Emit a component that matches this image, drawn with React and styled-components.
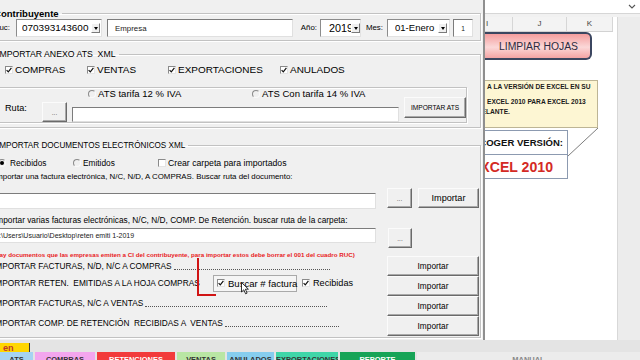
import React from 'react'
import styled, { createGlobalStyle } from 'styled-components'

const NARROW = `"Liberation Sans", Arial, sans-serif`
const SANS = `"Liberation Sans", Arial, sans-serif`
const K = 0.83
const fs = px => `${(px * K).toFixed(2)}px`

const GlobalStyle = createGlobalStyle`
  * { box-sizing: border-box; }
  html, body { margin: 0; padding: 0; }
  body {
    width: 640px;
    height: 360px;
    overflow: hidden;
    background: #fff;
    font-family: ${NARROW};
    color: #000;
  }
`

const Screen = styled.div`
  width: 640px;
  height: 360px;
  display: flex;
  flex-direction: column;
  overflow: hidden;
`
const Main = styled.div`
  display: flex;
  height: 340px;
`

/* ---------- the VBA user form ---------- */
const UserForm = styled.div`
  flex: 0 0 495px;
  margin-left: -10px;
  height: 340px;
  background: #f0f0f0;
  border-right: 2px solid #8f8f8f;
  padding: 0 2px;
  display: flex;
  flex-direction: column;
`
const Frame = styled.fieldset`
  margin: ${p => p.$top}px 0 0;
  padding: 0 0 ${p => p.$pad || 0}px;
  min-width: 0;
  border: 1px solid #c2c2c2;
  box-shadow: inset 1px 1px 0 #fff, 1px 1px 0 #fff;
`
const Legend = styled.legend`
  margin-left: ${p => p.$indent}px;
  padding: 0 3px 0 0;
  font-size: ${p => fs(p.$size)};
  font-weight: ${p => (p.$bold ? 700 : 400)};
  line-height: 11px;
  white-space: pre;
`
const InnerFrame = styled.div`
  display: flex;
  margin: 10px 13px 0 2px;
  height: 36px;
  border: 1px solid #c2c2c2;
  box-shadow: inset 1px 1px 0 #fff, 1px 1px 0 #fff;
`
const Column = styled.div`
  display: flex;
  flex-direction: column;
  flex: ${p => (p.$w ? 'none' : '1')};
  width: ${p => (p.$w ? `${p.$w}px` : 'auto')};
  margin-top: ${p => p.$mt || 0}px;
  min-width: 0;
`
const Row = styled.div`
  display: flex;
  align-items: ${p => p.$align || 'center'};
  height: ${p => p.$h}px;
  margin-top: ${p => p.$mt || 0}px;
  padding-left: ${p => p.$pl || 0}px;
  flex: none;
`
const FieldLabel = styled.span`
  flex: none;
  width: ${p => p.$w}px;
  padding-left: ${p => p.$pl || 0}px;
  padding-right: ${p => p.$pr || 0}px;
  text-align: ${p => p.$align || 'right'};
  font-size: ${p => fs(p.$fs || 10)};
  align-self: ${p => p.$self || 'auto'};
  line-height: 12px;
  white-space: nowrap;
`
const Combo = styled.div`
  flex: none;
  width: ${p => p.$w}px;
  height: 18px;
  display: flex;
  align-items: center;
  background: #fff;
  border: 1px solid;
  border-color: #8c8c8c #e2e2e2 #e2e2e2 #8c8c8c;
  padding-left: ${p => p.$pl}px;
  padding-right: ${p => p.$pr}px;
`
const ComboText = styled.span`
  flex: 1;
  overflow: hidden;
  white-space: nowrap;
  font-size: ${p => fs(p.$fs)};
  line-height: 16px;
`
const DropButton = styled.span`
  flex: none;
  width: 9px;
  height: 10px;
  background: #f0f0f0;
  border: 1px solid;
  border-color: #fff #7a7a7a #7a7a7a #fff;
  display: flex;
  align-items: center;
  justify-content: center;
  &::after {
    content: '';
    border-left: 2.5px solid transparent;
    border-right: 2.5px solid transparent;
    border-top: 3px solid #000;
  }
`
const TextBox = styled.div`
  flex: ${p => (p.$grow ? '1' : 'none')};
  width: ${p => (p.$w ? `${p.$w}px` : 'auto')};
  height: ${p => p.$h}px;
  margin-left: ${p => p.$ml || 0}px;
  align-self: ${p => p.$self || 'auto'};
  display: flex;
  align-items: center;
  justify-content: ${p => (p.$center ? 'center' : 'flex-start')};
  padding-left: ${p => p.$pl || 0}px;
  background: #fff;
  border: 1px solid;
  border-color: #7c7c7c #e0e0e0 #e0e0e0 #7c7c7c;
  font-size: ${p => fs(p.$fs || 9)};
  white-space: nowrap;
  overflow: hidden;
  color: #222;
`
const Option = styled.label`
  flex: none;
  width: ${p => (p.$w ? `${p.$w}px` : 'auto')};
  margin-left: ${p => p.$ml || 0}px;
  display: flex;
  align-items: center;
  gap: ${p => p.$gap ?? 2}px;
  font-size: ${p => fs(p.$fs || 10)};
  white-space: nowrap;
  line-height: 12px;
`
const CheckBox = styled.span`
  flex: none;
  width: 8px;
  height: 8px;
  background: #fff;
  border: 1px solid;
  border-color: #8a8a8a #e4e4e4 #e4e4e4 #8a8a8a;
  display: inline-flex;
  align-items: center;
  justify-content: center;
`
const RadioDot = styled.span`
  flex: none;
  width: 8px;
  height: 8px;
  border-radius: 50%;
  border: 1px solid;
  border-color: #8a8a8a #fafafa #fafafa #8a8a8a;
  display: inline-flex;
  align-items: center;
  justify-content: center;
  &::after {
    content: '';
    width: 4px;
    height: 4px;
    border-radius: 50%;
    background: ${p => (p.$on ? '#000' : 'transparent')};
  }
`
const Button = styled.button`
  flex: none;
  width: ${p => p.$w}px;
  height: ${p => p.$h}px;
  margin: ${p => p.$mt || 0}px 0 0 ${p => p.$ml || 0}px;
  padding: 0;
  align-self: ${p => p.$self || 'auto'};
  background: #f0f0f0;
  border: 1px solid;
  border-color: #fbfbfb #6a6a6a #6a6a6a #fbfbfb;
  box-shadow: inset -1px -1px 0 #a9a9a9;
  font-family: ${NARROW};
  font-size: ${p => fs(p.$fs || 10)};
  color: ${p => p.$color || '#000'};
  white-space: nowrap;
`
const InfoLine = styled.div`
  height: 12px;
  margin-top: ${p => p.$mt}px;
  padding-left: 1px;
  font-size: ${p => fs(p.$fs)};
  line-height: 12px;
  white-space: nowrap;
`
const Bottom = styled.div`
  display: flex;
  height: 86px;
  margin-top: 2px;
`
const RedNote = styled.div`
  height: 10px;
  font-size: ${fs(7.5)};
  font-weight: 700;
  line-height: 10px;
  color: #e8201c;
  white-space: nowrap;
`
const TaskRow = styled.div`
  position: relative;
  display: flex;
  align-items: center;
  height: ${p => p.$h}px;
  width: ${p => (p.$w ? `${p.$w}px` : 'auto')};
  font-size: ${fs(10)};
`
const TaskText = styled.span`
  flex: none;
  width: ${p => (p.$w ? `${p.$w}px` : 'auto')};
  white-space: pre;
`
const Leader = styled.span`
  flex: 1;
  height: 1px;
  margin: 7px 0 0 2px;
  border-bottom: 1px dotted #555;
`
const ToggleBox = styled.label`
  flex: none;
  width: 84px;
  height: 17px;
  display: flex;
  align-items: center;
  gap: 3px;
  padding-left: 3px;
  border: 1px solid #a9a9a9;
  background: #f5f5f5;
  font-size: ${fs(11.5)};
  white-space: nowrap;
`
const Annotation = styled.svg`
  position: absolute;
  left: 203px;
  top: -15px;
`
const Cursor = styled.svg`
  position: absolute;
  left: 248px;
  top: 10px;
`

/* ---------- the excel sheet on the right ---------- */
const Sheet = styled.div`
  flex: 1;
  display: flex;
  flex-direction: column;
  overflow: hidden;
  background: #fff;
`
const FormulaBar = styled.div`
  height: 14px;
  border-bottom: 1px solid #d6d6d6;
  display: flex;
  justify-content: flex-end;
  align-items: center;
  padding-right: 4px;
`
const Band = styled.div`
  height: 3px;
  background: #f1f1f1;
`
const GridArea = styled.div`
  flex: 1;
  display: flex;
`
const Cells = styled.div`
  width: 128px;
  display: flex;
  flex-direction: column;
`
const HeaderRow = styled.div`
  height: 15px;
  display: flex;
  background: #f3f3f3;
  border-bottom: 1px solid #d2d2d2;
`
const HeaderCell = styled.div`
  width: ${p => p.$w}px;
  border-right: 1px solid #d6d6d6;
  font: 8px/14px ${SANS};
  color: #444;
  text-align: ${p => p.$align || 'center'};
  padding-left: ${p => p.$pl || 0}px;
`
const SheetBody = styled.div`
  flex: 1;
  position: relative;
  display: flex;
  flex-direction: column;
  align-items: flex-start;
`
const ShapeButton = styled.div`
  width: 107px;
  height: 28px;
  display: flex;
  align-items: center;
  justify-content: center;
  padding-left: 2px;
  border: 2px solid #3b4660;
  border-left: none;
  border-radius: 0 6px 6px 0;
  background: linear-gradient(180deg, #f49d9d 0%, #fbd8d8 55%, #f4a4a4 100%);
  font-size: ${fs(12.5)};
  color: #2b2b40;
  white-space: nowrap;
`
const Note = styled.div`
  width: 113px;
  height: 48px;
  margin-top: 20px;
  padding: 1px 0 0 2px;
  background: #fdf6d3;
  border: 1px solid #bdb595;
  border-left: none;
  font-size: ${fs(8)};
  font-weight: 700;
  line-height: 10px;
  color: #1a1a1a;
  white-space: nowrap;
  overflow: hidden;
`
const NoteLine = styled.div`
  margin-top: ${p => p.$mt || 0}px;
  text-indent: ${p => p.$indent || 0}px;
`
const Callout = styled.svg`
  position: absolute;
  left: 80px;
  top: 92px;
`
const VersionCell = styled.div`
  width: 83px;
  height: ${p => p.$h}px;
  margin-top: ${p => p.$mt || 0}px;
  display: flex;
  align-items: center;
  justify-content: flex-end;
  padding-right: ${p => p.$pr}px;
  border: 1px solid #8c9ab0;
  border-left: none;
  ${p => (p.$joined ? 'border-top: none;' : '')}
  font-size: ${p => fs(p.$fs)};
  font-weight: 700;
  color: ${p => p.$color};
  white-space: nowrap;
  overflow: hidden;
`
const ScrollCol = styled.div`
  flex: 1;
  margin-left: 4px;
  background: #ececec;
  border-left: 1px solid #d8d8d8;
`

/* ---------- sheet tabs ---------- */
const TabBar = styled.div`
  height: 20px;
  background: #e4e4e4;
  display: flex;
  flex-direction: column;
`
const TabStrip = styled.div`
  height: 12px;
  display: flex;
  align-items: flex-end;
`
const LangTab = styled.div`
  width: 30px;
  height: 9px;
  padding-left: 3px;
  background: #ffd600;
  border-right: 1px solid #3a3a3a;
  color: #c0392b;
  font-size: ${fs(11)};
  font-weight: 700;
  line-height: 10px;
  overflow: hidden;
`
const SheetTabs = styled.div`
  height: 8px;
  display: flex;
  gap: 2px;
  overflow: hidden;
`
const SheetTab = styled.div`
  flex: ${p => (p.$w ? 'none' : '1')};
  width: ${p => (p.$w ? `${p.$w}px` : 'auto')};
  background: ${p => p.$bg};
  color: ${p => p.$fg || '#333'};
  font-size: ${fs(9)};
  font-weight: 700;
  line-height: 11px;
  padding-top: 2px;
  text-align: center;
  overflow: hidden;
  white-space: nowrap;
`

const Tick = () => (
  <svg width="6" height="6" viewBox="0 0 6 6">
    <path d="M0.6 3.1 L2.3 4.9 L5.4 0.8" fill="none" stroke="#111" strokeWidth="1.2" />
  </svg>
)

const Check = ({ on }) => <CheckBox>{on && <Tick />}</CheckBox>

const tabs = [
  { w: 33, bg: '#a6d3f2', t: 'ATS' },
  { w: 60, bg: '#f3a6ee', t: 'COMPRAS' },
  { w: 78, bg: '#f23b3b', t: 'RETENCIONES', fg: '#fff' },
  { w: 48, bg: '#b9e6a4', t: 'VENTAS' },
  { w: 47, bg: '#86cdee', t: 'ANULADOS' },
  { w: 62, bg: '#3fd6a8', t: 'EXPORTACIONES' },
  { w: 75, bg: '#17a457', t: 'REPORTE', fg: '#fff' },
  { bg: '#ececec', t: 'MANUAL', fg: '#888' },
]

export default function App() {
  return (
    <Screen>
      <GlobalStyle />
      <Main>
        <UserForm>
          <Frame $top={8} $pad={3}>
            <Legend $indent={1} $size={11.5} $bold>Contribuyente</Legend>
            <Row $h={18}>
              <FieldLabel $w={23} $pr={6} $fs={9.5}>Ruc:</FieldLabel>
              <Combo $w={86} $pl={5} $pr={1}>
                <ComboText $fs={12}>070393143600</ComboText>
                <DropButton />
              </Combo>
              <TextBox $w={186} $h={18} $ml={5} $pl={7} $fs={9.5}>Empresa</TextBox>
              <FieldLabel $w={27} $pr={3} $fs={9.5}>Año:</FieldLabel>
              <Combo $w={41} $pl={8} $pr={0}>
                <ComboText $fs={13}>2019</ComboText>
                <DropButton />
              </Combo>
              <FieldLabel $w={26} $pr={4} $fs={9.5}>Mes:</FieldLabel>
              <Combo $w={63} $pl={7} $pr={2}>
                <ComboText $fs={11.5}>01-Enero</ComboText>
                <DropButton />
              </Combo>
              <TextBox $w={20} $h={18} $ml={3} $center $fs={8}>1</TextBox>
            </Row>
          </Frame>

          <Frame $top={8} $pad={4}>
            <Legend $indent={4} $size={10.5}>IMPORTAR ANEXO ATS  XML</Legend>
            <Row $h={14} $mt={3} $pl={12}>
              <Option $w={82} $fs={12}><Check on />COMPRAS</Option>
              <Option $w={81} $fs={12}><Check on />VENTAS</Option>
              <Option $w={112} $fs={12}><Check on />EXPORTACIONES</Option>
              <Option $fs={12}><Check on />ANULADOS</Option>
            </Row>
            <InnerFrame>
              <Column>
                <Row $h={12} $pl={92}>
                  <Option $w={164} $fs={11.5}><RadioDot />ATS tarifa 12 % IVA</Option>
                  <Option $fs={11.5}><RadioDot />ATS Con tarifa 14 % IVA</Option>
                </Row>
                <Row $h={20} $mt={2} $align="stretch">
                  <FieldLabel $w={46} $pl={9} $align="left" $fs={11} $self="flex-start">Ruta:</FieldLabel>
                  <Button $w={25} $h={20} $fs={8} $color="#555">...</Button>
                  <TextBox $grow $h={15} $ml={5} $self="flex-end" />
                </Row>
              </Column>
              <Button $w={62} $h={21} $mt={9} $ml={5} $fs={8} $self="flex-start">IMPORTAR ATS</Button>
            </InnerFrame>
          </Frame>

          <Frame $top={12} $pad={1}>
            <Legend $indent={4} $size={9.8}>IMPORTAR DOCUMENTOS ELECTRÓNICOS XML</Legend>
            <Row $h={11} $mt={6} $pl={5}>
              <Option $w={75} $gap={4} $fs={10}><RadioDot $on />Recibidos</Option>
              <Option $w={85} $gap={2} $fs={10}><RadioDot />Emitidos</Option>
              <Option $gap={2} $fs={10.5}><Check />Crear carpeta para importados</Option>
            </Row>
            <InfoLine $mt={3} $fs={9.5}>
              Importar una factura electrónica, N/C, N/D, A COMPRAS. Buscar ruta del documento:
            </InfoLine>
            <Row $h={21} $mt={5} $align="stretch">
              <TextBox $w={383} $h={16} $self="flex-end" />
              <Button $w={25} $h={20} $ml={11} $fs={8} $color="#555" $self="flex-start">...</Button>
              <Button $w={61} $h={20} $ml={6} $fs={11} $self="flex-start">Importar</Button>
            </Row>
            <InfoLine $mt={5} $fs={10}>
              Importar varias facturas electrónicas, N/C, N/D, COMP. De Retención. buscar ruta de la carpeta:
            </InfoLine>
            <Row $h={20} $mt={2} $align="stretch">
              <TextBox $w={383} $h={15} $fs={8.5} $self="flex-start">C:\Users\Usuario\Desktop\reten emiti 1-2019</TextBox>
              <Button $w={24} $h={20} $ml={12} $fs={8} $color="#555">...</Button>
            </Row>
            <Bottom>
              <Column $w={394}>
                <RedNote>
                  (Hay documentos que las empresas emiten a CI del contribuyente, para importar estos debe borrar el 001 del cuadro RUC)
                </RedNote>
                <TaskRow $h={12} $w={337}>
                  <TaskText>IMPORTAR FACTURAS, N/D, N/C A COMPRAS</TaskText>
                  <Leader />
                </TaskRow>
                <TaskRow $h={22}>
                  <TaskText $w={220}>IMPORTAR RETEN.  EMITIDAS A LA HOJA COMPRAS</TaskText>
                  <ToggleBox><Check on />Buscar # factura</ToggleBox>
                  <Option $gap={3} $fs={11} $ml={5}><Check on />Recibidas</Option>
                  <Annotation width="22" height="40" viewBox="0 0 22 40">
                    <path d="M2 1 V38 H20" fill="none" stroke="#d01414" strokeWidth="2" />
                  </Annotation>
                  <Cursor width="8" height="13" viewBox="0 0 8 13">
                    <path d="M0.5 0.5 L0.5 10 L2.8 7.8 L4.6 11.8 L6.1 11.1 L4.4 7.2 L7.4 7.2 Z" fill="#fff" stroke="#000" strokeWidth="0.8" />
                  </Cursor>
                </TaskRow>
                <TaskRow $h={18} $w={334}>
                  <TaskText>IMPORTAR FACTURAS, N/C A VENTAS</TaskText>
                  <Leader />
                </TaskRow>
                <TaskRow $h={22} $w={346}>
                  <TaskText>IMPORTAR COMP. DE RETENCIÓN  RECIBIDAS A  VENTAS</TaskText>
                  <Leader />
                </TaskRow>
              </Column>
              <Column $w={92} $mt={6}>
                <Button $w={92} $h={20} $fs={10}>Importar</Button>
                <Button $w={92} $h={20} $fs={10}>Importar</Button>
                <Button $w={92} $h={20} $fs={10}>Importar</Button>
                <Button $w={92} $h={20} $fs={10}>Importar</Button>
              </Column>
            </Bottom>
          </Frame>
        </UserForm>

        <Sheet>
          <FormulaBar>
            <svg width="8" height="5" viewBox="0 0 8 5">
              <path d="M1 1 L4 4 L7 1" fill="none" stroke="#555" strokeWidth="1.1" />
            </svg>
          </FormulaBar>
          <Band />
          <GridArea>
            <Cells>
              <HeaderRow>
                <HeaderCell $w={28} $align="left" $pl={1}>I</HeaderCell>
                <HeaderCell $w={54}>J</HeaderCell>
                <HeaderCell $w={46}>K</HeaderCell>
              </HeaderRow>
              <SheetBody>
                <ShapeButton>LIMPIAR HOJAS</ShapeButton>
                <Note>
                  <NoteLine>A LA VERSIÓN DE EXCEL EN SU</NoteLine>
                  <NoteLine $mt={5}>EXCEL 2010 PARA EXCEL 2013</NoteLine>
                  <NoteLine $indent={-15}>ADELANTE.</NoteLine>
                </Note>
                <Callout width="40" height="36" viewBox="0 0 40 36">
                  <path d="M33 4 L3 32" fill="none" stroke="#7d7d7d" strokeWidth="1" />
                </Callout>
                <VersionCell $h={25} $mt={2} $pr={4} $fs={11.5} $color="#111">ESCOGER VERSIÓN:</VersionCell>
                <VersionCell $h={24} $pr={14} $fs={17} $color="#d42a24" $joined>EXCEL 2010</VersionCell>
              </SheetBody>
            </Cells>
            <ScrollCol />
          </GridArea>
        </Sheet>
      </Main>

      <TabBar>
        <TabStrip>
          <LangTab>en</LangTab>
        </TabStrip>
        <SheetTabs>
          {tabs.map((t, i) => (
            <SheetTab key={i} $w={t.w} $bg={t.bg} $fg={t.fg}>{t.t}</SheetTab>
          ))}
        </SheetTabs>
      </TabBar>
    </Screen>
  )
}
